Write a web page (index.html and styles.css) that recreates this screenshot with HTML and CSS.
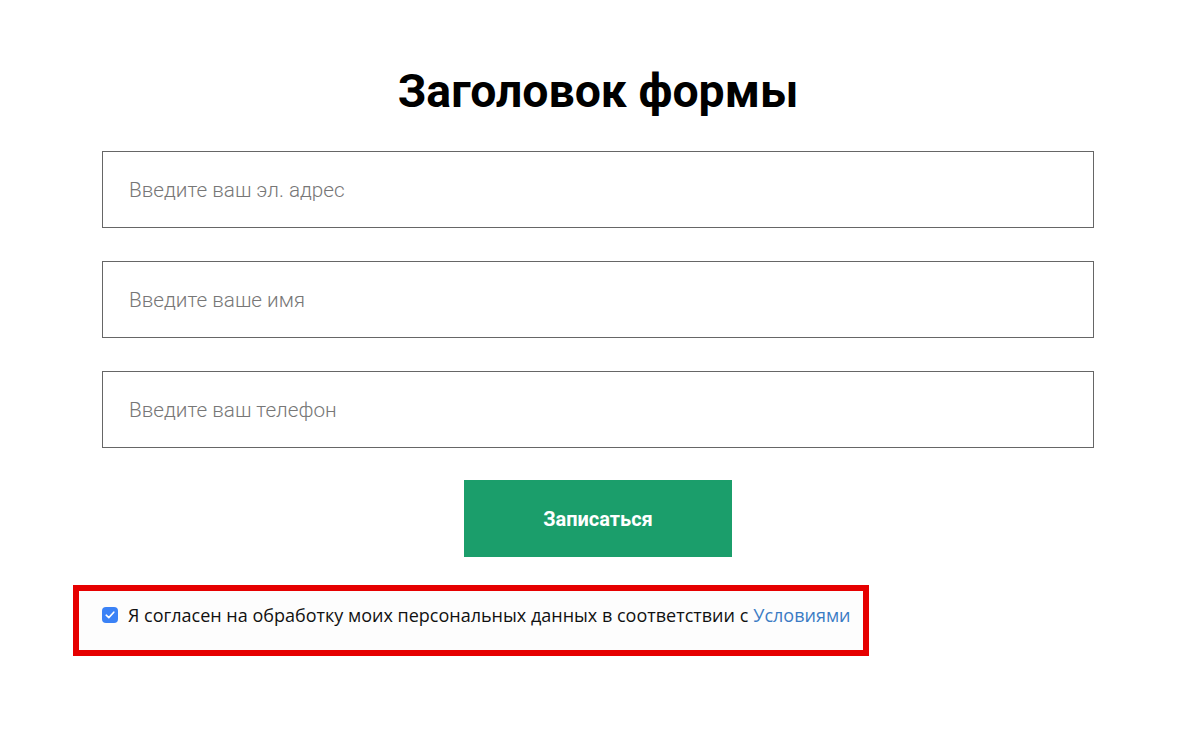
FILE: index.html
```html
<!DOCTYPE html>
<html lang="ru">

<head>
  <meta charset="UTF-8">
  <meta name="viewport" content="width=device-width, initial-scale=1.0">
  <title>Заголовок формы</title>
  <link rel="stylesheet" href="styles.css">
</head>

<body>
  <div class="container">
    <h1 class="form-title">Заголовок формы</h1>
    <form class="subscribe-form" onsubmit="return false">
      <input class="field" type="email" placeholder="Введите ваш эл. адрес">
      <input class="field" type="text" placeholder="Введите ваше имя">
      <input class="field" type="tel" placeholder="Введите ваш телефон">
      <button class="submit" type="submit">Записаться</button>
      <div class="agree-box">
        <label class="agree">
          <span class="check">
            <svg width="10" height="8" viewBox="0 0 10 8"><path d="M1.2 4.2 L3.8 6.6 L8.8 1.2" fill="none" stroke="#fff" stroke-width="1.6" stroke-linecap="round" stroke-linejoin="round"/></svg>
          </span>
          Я согласен на обработку моих персональных данных в соответствии с <a href="#">Условиями</a>
        </label>
      </div>
    </form>
  </div>
</body>

</html>
```

FILE: styles.css
```css
body {
  /* page is centred a little left of the window */
  margin: 0 3px 0 0;
  background-color: #fff;
  font-family: Roboto, "Noto Sans", sans-serif;
}

.container {
  width: 992px;
  margin: 0 auto;
  padding-top: 59px;
}

.form-title {
  margin: 0 0 28px;
  text-align: center;
  font-size: 46.4px;
  font-weight: 700;
  line-height: 64px;
  color: #000;
}

.subscribe-form {
  display: flex;
  flex-direction: column;
  align-items: center;
}

.field {
  box-sizing: border-box;
  width: 100%;
  height: 77px;
  margin-bottom: 33px;
  padding: 0 26px;
  border: 1px solid #666;
  outline: none;
  font-family: Roboto, sans-serif;
  font-size: 20.7px;
  font-weight: 300;
}

.field:last-of-type {
  margin-bottom: 32px;
}

.field::placeholder {
  color: #777;
}

.submit {
  width: 268px;
  height: 77px;
  border: none;
  background-color: #1b9e6b;
  color: #fff;
  font-family: Roboto, sans-serif;
  font-size: 20px;
  font-weight: 700;
  cursor: pointer;
}

.agree-box {
  box-sizing: border-box;
  align-self: flex-start;
  width: 796px;
  height: 71px;
  margin: 28px 0 0 -29px;
  padding: 0 0 12px 23px;
  border: 6px solid #e60000;
  background-color: #fdfdfd;
  display: flex;
  align-items: center;
}

.agree {
  display: flex;
  align-items: center;
  font-family: "Open Sans", sans-serif;
  font-size: 18px;
  color: #111;
  white-space: nowrap;
}

.check {
  display: inline-flex;
  align-items: center;
  justify-content: center;
  width: 16px;
  height: 16px;
  margin-right: 10px;
  border-radius: 4px;
  background-color: #3b82f6;
}

.agree a {
  margin-left: 5px;
  color: #3a7bc4;
  text-decoration: none;
}
```
